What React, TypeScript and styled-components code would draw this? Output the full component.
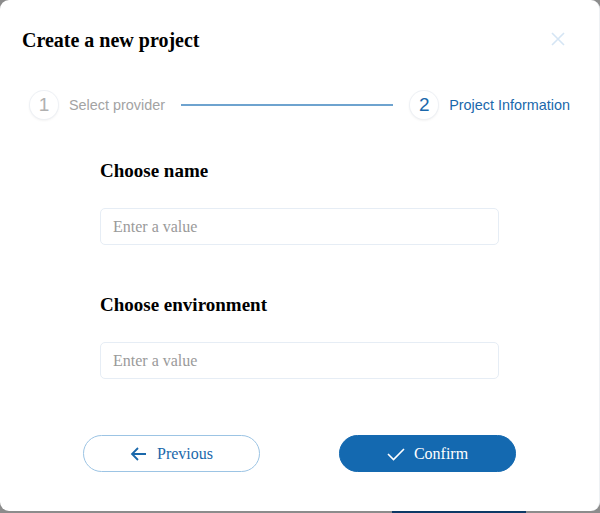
import * as React from 'react';
import styled, { createGlobalStyle } from 'styled-components';

const GlobalStyle = createGlobalStyle`
    html, body {
        margin: 0;
        padding: 0;
        background: #8c8c8c;
    }
    #root {
        width: 600px;
        height: 513px;
    }
`;

const Page = styled.div`
    width: 600px;
    height: 513px;
    display: flex;
    flex-direction: column;
    background: #8c8c8c;
`;

const Modal = styled.div`
    flex: 1;
    background: #fff;
    border-radius: 9px;
    border-right: 1px solid #eef1f4;
    display: flex;
    flex-direction: column;
    font-family: 'Liberation Serif', 'Times New Roman', serif;
`;

const BottomStrip = styled.div`
    height: 2px;
    display: flex;
`;

const StripPart = styled.div<{ $dark?: boolean; $w: number }>`
    width: ${(p) => p.$w}px;
    background: ${(p) => (p.$dark ? '#0d3a66' : 'transparent')};
`;

const Header = styled.div`
    display: flex;
    align-items: center;
    justify-content: space-between;
    padding: 27px 32px 0 22px;
`;

const Title = styled.h1`
    margin: 0;
    font-size: 20px;
    font-weight: bold;
    color: #000;
    line-height: 26px;
`;

const CloseButton = styled.button`
    border: 0;
    background: none;
    padding: 0;
    width: 16px;
    height: 16px;
    display: flex;
    cursor: pointer;
`;

const Stepper = styled.div`
    display: flex;
    align-items: center;
    padding: 0 29px 0 30px;
    margin-top: 38px;
    font-family: 'Liberation Sans', Arial, sans-serif;
`;

const Step = styled.div<{ $active?: boolean }>`
    display: flex;
    align-items: center;
    gap: 11px;
    color: ${(p) => (p.$active ? '#1a68ab' : '#a3a3a3')};
    font-size: 14.4px;
`;

const StepCircle = styled.div<{ $active?: boolean }>`
    width: 28px;
    height: 28px;
    border-radius: 50%;
    background: #fff;
    box-shadow: 0 0 0 1px #eef1f5, 0 1px 3px rgba(0, 0, 0, 0.1);
    display: flex;
    align-items: center;
    justify-content: center;
    font-size: 19px;
    color: ${(p) => (p.$active ? '#1a68ab' : '#b0b0b0')};
`;

const StepLine = styled.div`
    flex: 1;
    height: 2px;
    background: #6ea3cf;
    margin: 0 17px 0 16px;
`;

const Body = styled.div`
    padding: 0 100px;
    margin-top: 40px;
    display: flex;
    flex-direction: column;
`;

const Field = styled.div`
    display: flex;
    flex-direction: column;
    margin-bottom: 48px;
`;

const Label = styled.h3`
    margin: 0 0 25px;
    font-size: 19px;
    font-weight: bold;
    line-height: 24px;
    color: #000;
`;

const Input = styled.input`
    box-sizing: border-box;
    width: 100%;
    height: 37px;
    border: 1px solid #e6edf5;
    border-radius: 5px;
    padding: 0 12px;
    font-family: 'Liberation Serif', 'Times New Roman', serif;
    font-size: 16px;
    color: #333;
    outline: none;
    &::placeholder {
        color: #9a9a9a;
    }
`;

const Footer = styled.div`
    display: flex;
    justify-content: space-between;
    padding: 0 83px;
    margin-top: 8px;
`;

const Button = styled.button<{ $primary?: boolean }>`
    width: 177px;
    height: 37px;
    border-radius: 19px;
    box-sizing: border-box;
    border: 1px solid ${(p) => (p.$primary ? '#1469b0' : '#9cc4e4')};
    background: ${(p) => (p.$primary ? '#1469b0' : '#fff')};
    color: ${(p) => (p.$primary ? '#fff' : '#1a68ab')};
    font-family: 'Liberation Serif', 'Times New Roman', serif;
    font-size: 16px;
    display: flex;
    align-items: center;
    justify-content: center;
    gap: 9px;
    cursor: pointer;
`;

const steps = [
    { n: 1, label: 'Select provider' },
    { n: 2, label: 'Project Information' },
];

const App: React.FC = () => {
    return (
        <>
            <GlobalStyle />
            <Page>
                <Modal>
                    <Header>
                        <Title>Create a new project</Title>
                        <CloseButton aria-label="close">
                            <svg width="14" height="14" viewBox="0 0 14 14">
                                <path
                                    d="M1 1 L13 13 M13 1 L1 13"
                                    stroke="#d5e5f4"
                                    strokeWidth="1.6"
                                />
                            </svg>
                        </CloseButton>
                    </Header>
                    <Stepper>
                        <Step>
                            <StepCircle>{steps[0].n}</StepCircle>
                            {steps[0].label}
                        </Step>
                        <StepLine />
                        <Step $active>
                            <StepCircle $active>{steps[1].n}</StepCircle>
                            {steps[1].label}
                        </Step>
                    </Stepper>
                    <Body>
                        <Field>
                            <Label>Choose name</Label>
                            <Input placeholder="Enter a value" />
                        </Field>
                        <Field>
                            <Label>Choose environment</Label>
                            <Input placeholder="Enter a value" />
                        </Field>
                    </Body>
                    <Footer>
                        <Button>
                            <svg width="18" height="16" viewBox="0 0 18 16">
                                <path
                                    d="M16 8 H2 M8 2 L2 8 L8 14"
                                    stroke="#1a68ab"
                                    strokeWidth="1.8"
                                    fill="none"
                                />
                            </svg>
                            Previous
                        </Button>
                        <Button $primary>
                            <svg width="18" height="14" viewBox="0 0 18 14">
                                <path
                                    d="M1 7 L6.5 12.5 L17 2"
                                    stroke="#fff"
                                    strokeWidth="1.6"
                                    fill="none"
                                />
                            </svg>
                            Confirm
                        </Button>
                    </Footer>
                </Modal>
                <BottomStrip>
                    <StripPart $w={392} />
                    <StripPart $dark $w={134} />
                </BottomStrip>
            </Page>
        </>
    );
};

export default App;
